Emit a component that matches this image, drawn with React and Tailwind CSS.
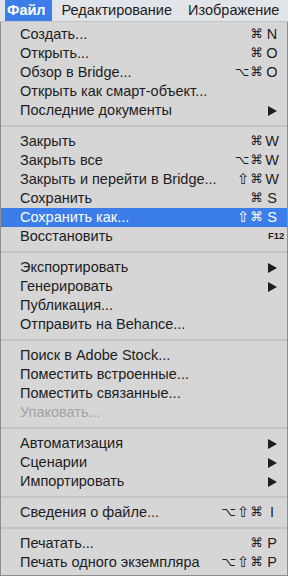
const groups = [
  [
    { label: 'Создать...', mods: '⌘', key: 'N' },
    { label: 'Открыть...', mods: '⌘', key: 'O' },
    { label: 'Обзор в Bridge...', mods: '⌥⌘', key: 'O' },
    { label: 'Открыть как смарт-объект...' },
    { label: 'Последние документы', sub: true },
  ],
  [
    { label: 'Закрыть', mods: '⌘', key: 'W' },
    { label: 'Закрыть все', mods: '⌥⌘', key: 'W' },
    { label: 'Закрыть и перейти в Bridge...', mods: '⇧⌘', key: 'W' },
    { label: 'Сохранить', mods: '⌘', key: 'S' },
    { label: 'Сохранить как...', mods: '⇧⌘', key: 'S', active: true },
    { label: 'Восстановить', fkey: 'F12' },
  ],
  [
    { label: 'Экспортировать', sub: true },
    { label: 'Генерировать', sub: true },
    { label: 'Публикация...' },
    { label: 'Отправить на Behance...' },
  ],
  [
    { label: 'Поиск в Adobe Stock...' },
    { label: 'Поместить встроенные...' },
    { label: 'Поместить связанные...' },
    { label: 'Упаковать...', disabled: true },
  ],
  [
    { label: 'Автоматизация', sub: true },
    { label: 'Сценарии', sub: true },
    { label: 'Импортировать', sub: true },
  ],
  [{ label: 'Сведения о файле...', mods: '⌥⇧⌘', key: 'I' }],
  [
    { label: 'Печатать...', mods: '⌘', key: 'P' },
    { label: 'Печать одного экземпляра', mods: '⌥⇧⌘', key: 'P' },
  ],
]

function Mod({ ch }) {
  // shift arrow is small in DejaVu, bump it up a bit
  const size = ch === '⇧' ? 'text-[15px]' : 'text-[12.5px]'
  return <span className={`ml-[1px] leading-none ${size}`}>{ch}</span>
}

function Row({ item }) {
  const color = item.active
    ? 'bg-[#3b7de9] text-white'
    : item.disabled
      ? 'text-[#a3a3a3]'
      : 'text-[#1d1d1d]'

  return (
    <div className={`flex items-center h-[19px] pl-[19px] pr-[8px] ${color}`}>
      <span className="flex-1 whitespace-nowrap">{item.label}</span>

      {item.mods && (
        <span className="flex items-center font-['DejaVu_Sans'] pr-[2px]">
          {[...item.mods].map((ch, i) => (
            <Mod key={i} ch={ch} />
          ))}
        </span>
      )}
      {item.key && <span className="w-[14px] text-center">{item.key}</span>}

      {item.fkey && (
        <span className="w-[14px] pl-[3px] text-[9.5px] font-bold whitespace-nowrap">{item.fkey}</span>
      )}

      {item.sub && (
        <span className="w-[14px] flex items-center justify-center">
          <svg width="9" height="10" viewBox="0 0 9 10">
            <path d="M0 0 L9 5 L0 10 Z" fill="currentColor" />
          </svg>
        </span>
      )}
    </div>
  )
}

export default function App() {
  return (
    <div className="w-[288px] h-[576px] flex flex-col bg-[#d6d6d6] font-['Liberation_Sans',sans-serif] text-[14.5px] overflow-hidden">
      {/* menu bar */}
      <div className="h-[22px] flex items-stretch bg-[#e1e4e8] border-b border-[#c2c4c7] text-[#1d1d1d] whitespace-nowrap">
        <div className="ml-[5px] pl-[2px] pr-[6px] flex items-center bg-[#3b7de9] text-white font-bold">
          Файл
        </div>
        <div className="pl-[10px] flex items-center">Редактирование</div>
        <div className="pl-[16px] flex items-center">Изображение</div>
      </div>

      {/* menu */}
      <div className="flex-1 flex flex-col pt-[3px] border-x border-b border-[#8e8e8e]">
        {groups.map((g, i) => (
          <div key={i}>
            {i > 0 && (
              <div className="h-[12px] flex items-center">
                <div className="w-full h-[2px] bg-[#c4c4c4]" />
              </div>
            )}
            {g.map((item) => (
              <Row key={item.label} item={item} />
            ))}
          </div>
        ))}
      </div>
    </div>
  )
}
